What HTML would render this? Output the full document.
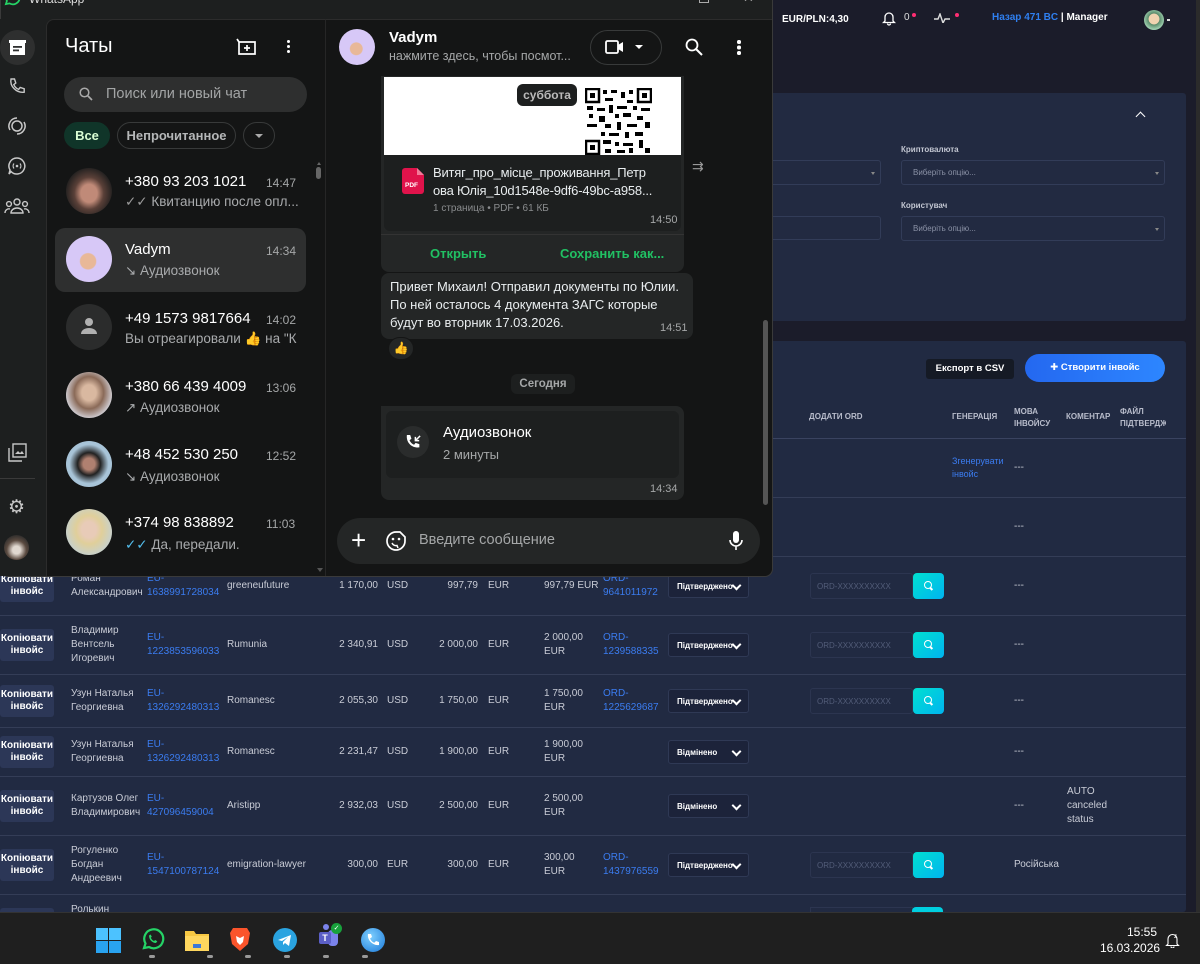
<!DOCTYPE html>
<html><head><meta charset="utf-8">
<style>
*{margin:0;padding:0;box-sizing:border-box}
body{width:1200px;height:964px;overflow:hidden;background:#1b1c2a;font-family:"Liberation Sans","DejaVu Sans",sans-serif;position:relative;color:#fff}
.a{position:absolute}
.t{font-size:10px;color:#c9ccd6;line-height:14px;white-space:nowrap}
.blue{color:#3b7cf0}
.row{position:absolute;left:0;width:1186px;border-bottom:1px solid #343d57}
.c{position:absolute;top:0;height:100%;display:flex;align-items:center}
.r{justify-content:flex-end;width:70px}
.btn{background:#2c3757;border-radius:3px;width:54px;height:32px;font-weight:bold;font-size:10px;line-height:12px;color:#fff;display:flex;align-items:center;justify-content:center;text-align:center}
.sel{width:81px;height:24px;border:1px solid #2f3955;border-radius:3px;background:#1c233a;font-size:8px;font-weight:bold;color:#fff;padding-left:8px;display:flex;align-items:center;position:relative}
.sel:after{content:"";position:absolute;right:8px;top:7px;width:5px;height:5px;border-right:2px solid #fff;border-bottom:2px solid #fff;transform:rotate(45deg)}
.ord{width:103px;height:26px;border:1px solid #2c3550;border-radius:3px;font-size:8px;color:#525c78;padding-left:6px;display:flex;align-items:center;position:relative}
.ordb{position:absolute;left:102px;top:-1px;width:31px;height:26px;border-radius:4px;background:linear-gradient(135deg,#00e0d0,#00b4f0)}
.ordb:before{content:"";position:absolute;left:11px;top:8px;width:6px;height:6px;border:1.5px solid #fff;border-radius:50%}
.ordb:after{content:"";position:absolute;left:17px;top:15px;width:3px;height:1.5px;background:#fff;transform:rotate(45deg)}
.wa{font-family:"Liberation Sans",sans-serif}
.nm{font-size:15px;color:#fff;position:absolute;left:125px}
.tm{font-size:12px;color:#a5a7a8;position:absolute;left:266px}
.sub{font-size:13.5px;color:#a9abad;position:absolute;left:125px;white-space:nowrap}
.av{position:absolute;left:66px;width:46px;height:46px;border-radius:50%}
</style></head><body>

<!-- web page header -->
<div class="a" style="left:782px;top:14px;font-size:10px;font-weight:bold">EUR/PLN:4,30</div>
<svg class="a" style="left:882px;top:10px" width="14" height="16" viewBox="0 0 14 16"><path d="M3 11V7a4 4 0 0 1 8 0v4l1.5 1.5h-11z M5.5 13.5a1.5 1.5 0 0 0 3 0" fill="none" stroke="#fff" stroke-width="1.3"/></svg>
<div class="a" style="left:904px;top:12px;font-size:10px;color:#ddd">0</div>
<div class="a" style="left:912px;top:13px;width:4px;height:4px;border-radius:50%;background:#ff2d72"></div>
<svg class="a" style="left:934px;top:13px" width="16" height="10" viewBox="0 0 16 10"><path d="M0 6h4l2-5 3 9 2-4h5" fill="none" stroke="#ddd" stroke-width="1.4"/></svg>
<div class="a" style="left:955px;top:13px;width:4px;height:4px;border-radius:50%;background:#ff2d72"></div>
<div class="a" style="left:992px;top:12px;font-size:10px;font-weight:bold"><span style="color:#2f7ff0">Назар 471 BC</span> <span style="color:#fff">| Manager</span></div>
<div class="a" style="left:1144px;top:10px;width:20px;height:20px;border-radius:50%;background:radial-gradient(circle at 50% 45%,#f1d3b0 35%,#5a8a6a 38%,#9fd0b0 70%)"></div>
<div class="a" style="left:1167px;top:19px;width:3px;height:1.5px;background:#ddd"></div>

<!-- filter card -->
<div class="a" style="left:0;top:93px;width:1186px;height:228px;border-radius:3px;background:#222a41"></div>
<div class="a" style="left:1137px;top:113px;width:7px;height:7px;border-left:1.5px solid #fff;border-top:1.5px solid #fff;transform:rotate(45deg)"></div>
<div class="a" style="left:901px;top:145px;font-size:8px;color:#c3c7d2;font-weight:bold">Криптовалюта</div>
<div class="a" style="left:901px;top:160px;width:264px;height:25px;border:1px solid #323c58;border-radius:3px;font-size:8px;color:#8b92a6;padding:7px 0 0 11px">Виберіть опцію...</div>
<div class="a" style="left:1155px;top:172px;border:2px solid transparent;border-top:3px solid #888"></div>
<div class="a" style="left:600px;top:160px;width:281px;height:25px;border:1px solid #323c58;border-radius:3px"></div>
<div class="a" style="left:871px;top:172px;border:2px solid transparent;border-top:3px solid #888"></div>
<div class="a" style="left:901px;top:201px;font-size:8px;color:#c3c7d2;font-weight:bold">Користувач</div>
<div class="a" style="left:901px;top:216px;width:264px;height:25px;border:1px solid #323c58;border-radius:3px;font-size:8px;color:#8b92a6;padding:7px 0 0 11px">Виберіть опцію...</div>
<div class="a" style="left:1155px;top:228px;border:2px solid transparent;border-top:3px solid #888"></div>
<div class="a" style="left:600px;top:216px;width:281px;height:24px;border:1px solid #323c58;border-radius:3px"></div>

<!-- table card -->
<div class="a" style="left:0;top:341px;width:1186px;height:571px;background:#212a42;border-radius:3px"></div>
<div class="a" style="left:926px;top:359px;width:88px;height:20px;background:#151a25;border-radius:3px;font-size:9.5px;font-weight:bold;text-align:center;line-height:20px">Експорт в CSV</div>
<div class="a" style="left:1025px;top:354px;width:140px;height:28px;background:linear-gradient(90deg,#2468f0,#2d86ff);border-radius:14px;font-size:9.5px;font-weight:bold;text-align:center;line-height:28px">✚ Створити інвойс</div>
<div class="a" style="left:809px;top:412px;font-size:8px;font-weight:bold;color:#b8bccb">ДОДАТИ ORD</div>
<div class="a" style="left:952px;top:412px;font-size:8px;font-weight:bold;color:#b8bccb">ГЕНЕРАЦІЯ</div>
<div class="a" style="left:1014px;top:406px;font-size:8px;font-weight:bold;color:#b8bccb;line-height:12px">МОВА<br>ІНВОЙСУ</div>
<div class="a" style="left:1066px;top:412px;font-size:8px;font-weight:bold;color:#b8bccb">КОМЕНТАР</div>
<div class="a" style="left:1120px;top:406px;font-size:8px;font-weight:bold;color:#b8bccb;line-height:12px;white-space:nowrap;width:46px;overflow:hidden">ФАЙЛ<br>ПІДТВЕРДЖ</div>
<div class="a" style="left:0;top:438px;width:1186px;height:1px;background:#3a4360"></div>
<div class="row" style="top:439px;height:59px">
 <div class="c t blue" style="left:952px;line-height:13px;font-size:9px">Згенерувати<br>інвойс</div>
 <div class="c t" style="left:1014px">---</div>
</div>
<div class="row" style="top:498px;height:59px"><div class="c t" style="left:1014px">---</div></div>

<div class="row" style="top:557px;height:59px">
 <div class="c" style="left:0"><div class="btn">Копіювати<br>інвойс</div></div>
 <div class="c t" style="left:71px">Роман<br>Александрович</div>
 <div class="c t blue" style="left:147px">EU-<br>1638991728034</div>
 <div class="c t" style="left:227px">greeneufuture</div>
 <div class="c t r" style="left:308px">1 170,00</div>
 <div class="c t" style="left:387px">USD</div>
 <div class="c t r" style="left:408px">997,79</div>
 <div class="c t" style="left:488px">EUR</div>
 <div class="c t" style="left:544px">997,79 EUR</div>
 <div class="c t blue" style="left:603px">ORD-<br>9641011972</div>
 <div class="c" style="left:668px"><div class="sel">Підтверджено</div></div>
 <div class="c" style="left:810px"><div class="ord">ORD-XXXXXXXXXX<div class="ordb"></div></div></div>
 <div class="c t" style="left:1014px">---</div>
</div>
<div class="row" style="top:616px;height:59px">
 <div class="c" style="left:0"><div class="btn">Копіювати<br>інвойс</div></div>
 <div class="c t" style="left:71px">Владимир<br>Вентсель<br>Игоревич</div>
 <div class="c t blue" style="left:147px">EU-<br>1223853596033</div>
 <div class="c t" style="left:227px">Rumunia</div>
 <div class="c t r" style="left:308px">2 340,91</div>
 <div class="c t" style="left:387px">USD</div>
 <div class="c t r" style="left:408px">2 000,00</div>
 <div class="c t" style="left:488px">EUR</div>
 <div class="c t" style="left:544px">2 000,00<br>EUR</div>
 <div class="c t blue" style="left:603px">ORD-<br>1239588335</div>
 <div class="c" style="left:668px"><div class="sel">Підтверджено</div></div>
 <div class="c" style="left:810px"><div class="ord">ORD-XXXXXXXXXX<div class="ordb"></div></div></div>
 <div class="c t" style="left:1014px">---</div>
</div>
<div class="row" style="top:675px;height:53px">
 <div class="c" style="left:0"><div class="btn">Копіювати<br>інвойс</div></div>
 <div class="c t" style="left:71px">Узун Наталья<br>Георгиевна</div>
 <div class="c t blue" style="left:147px">EU-<br>1326292480313</div>
 <div class="c t" style="left:227px">Romanesc</div>
 <div class="c t r" style="left:308px">2 055,30</div>
 <div class="c t" style="left:387px">USD</div>
 <div class="c t r" style="left:408px">1 750,00</div>
 <div class="c t" style="left:488px">EUR</div>
 <div class="c t" style="left:544px">1 750,00<br>EUR</div>
 <div class="c t blue" style="left:603px">ORD-<br>1225629687</div>
 <div class="c" style="left:668px"><div class="sel">Підтверджено</div></div>
 <div class="c" style="left:810px"><div class="ord">ORD-XXXXXXXXXX<div class="ordb"></div></div></div>
 <div class="c t" style="left:1014px">---</div>
</div>
<div class="row" style="top:728px;height:49px">
 <div class="c" style="left:0"><div class="btn">Копіювати<br>інвойс</div></div>
 <div class="c t" style="left:71px">Узун Наталья<br>Георгиевна</div>
 <div class="c t blue" style="left:147px">EU-<br>1326292480313</div>
 <div class="c t" style="left:227px">Romanesc</div>
 <div class="c t r" style="left:308px">2 231,47</div>
 <div class="c t" style="left:387px">USD</div>
 <div class="c t r" style="left:408px">1 900,00</div>
 <div class="c t" style="left:488px">EUR</div>
 <div class="c t" style="left:544px">1 900,00<br>EUR</div>
 <div class="c" style="left:668px"><div class="sel">Відмінено</div></div>
 <div class="c t" style="left:1014px">---</div>
</div>
<div class="row" style="top:777px;height:59px">
 <div class="c" style="left:0"><div class="btn">Копіювати<br>інвойс</div></div>
 <div class="c t" style="left:71px">Картузов Олег<br>Владимирович</div>
 <div class="c t blue" style="left:147px">EU-<br>427096459004</div>
 <div class="c t" style="left:227px">Aristipp</div>
 <div class="c t r" style="left:308px">2 932,03</div>
 <div class="c t" style="left:387px">USD</div>
 <div class="c t r" style="left:408px">2 500,00</div>
 <div class="c t" style="left:488px">EUR</div>
 <div class="c t" style="left:544px">2 500,00<br>EUR</div>
 <div class="c" style="left:668px"><div class="sel">Відмінено</div></div>
 <div class="c t" style="left:1014px">---</div>
 <div class="c t" style="left:1067px">AUTO<br>canceled<br>status</div>
</div>
<div class="row" style="top:836px;height:59px">
 <div class="c" style="left:0"><div class="btn">Копіювати<br>інвойс</div></div>
 <div class="c t" style="left:71px">Рогуленко<br>Богдан<br>Андреевич</div>
 <div class="c t blue" style="left:147px">EU-<br>1547100787124</div>
 <div class="c t" style="left:227px">emigration-lawyer</div>
 <div class="c t r" style="left:308px">300,00</div>
 <div class="c t" style="left:387px">EUR</div>
 <div class="c t r" style="left:408px">300,00</div>
 <div class="c t" style="left:488px">EUR</div>
 <div class="c t" style="left:544px">300,00<br>EUR</div>
 <div class="c t blue" style="left:603px">ORD-<br>1437976559</div>
 <div class="c" style="left:668px"><div class="sel">Підтверджено</div></div>
 <div class="c" style="left:810px"><div class="ord">ORD-XXXXXXXXXX<div class="ordb"></div></div></div>
 <div class="c t" style="left:1014px">Російська</div>
</div>
<div class="a t" style="left:71px;top:903px">Ролькин</div>
<div class="a" style="left:0;top:908px;width:54px;height:4px;background:#2c3757;border-radius:3px 3px 0 0"></div>
<div class="a" style="left:810px;top:907px;width:103px;height:5px;border:1px solid #2c3550;border-bottom:0"></div>
<div class="a" style="left:912px;top:907px;width:31px;height:5px;background:#00cfe0;border-radius:4px 4px 0 0"></div>
<div class="a" style="left:1196px;top:0;width:4px;height:912px;background:#2b2b2b"></div>

<!-- taskbar -->
<div class="a" style="left:0;top:912px;width:1200px;height:52px;background:#1f1f1f;border-top:1px solid #333"></div>
<svg class="a" style="left:96px;top:928px" width="25" height="25"><rect x="0" y="0" width="12" height="12" fill="#4cc2ff"/><rect x="13" y="0" width="12" height="12" fill="#4cc2ff"/><rect x="0" y="13" width="12" height="12" fill="#29a3f0"/><rect x="13" y="13" width="12" height="12" fill="#29a3f0"/></svg>
<svg class="a" style="left:140px;top:927px" width="25" height="25" viewBox="0 0 25 25"><path d="M4 21l1.5-4.5A9.5 9.5 0 1 1 9 20z" fill="none" stroke="#25d366" stroke-width="2.2"/><path d="M9 8.5c0 4 3 7.5 7 7.5l1.3-1.8-2.2-1.2-1 1c-1.5-.7-2.6-1.8-3.3-3.3l1-1-1.2-2.2z" fill="#25d366"/></svg>
<svg class="a" style="left:185px;top:929px" width="24" height="22"><path d="M0 2h9l2 3h13v17H0z" fill="#f7c843"/><rect x="0" y="7" width="24" height="15" fill="#ffd75e"/><rect x="8" y="15" width="8" height="4" fill="#3b78d8"/></svg>
<svg class="a" style="left:230px;top:926px" width="20" height="26" viewBox="0 0 20 26"><path d="M3 2h14l3 5-2 11-8 7-8-7L0 7z" fill="#fb542b"/><path d="M6 10l4 2 4-2-1 6-3 3-3-3z" fill="#fff"/></svg>
<div class="a" style="left:273px;top:928px;width:24px;height:24px;border-radius:50%;background:#2aa3e0"></div>
<svg class="a" style="left:278px;top:934px" width="14" height="12"><path d="M0 6l13-5-2 11-4-3-2 2v-3l5-5-6 4z" fill="#fff"/></svg>
<div class="a" style="left:328px;top:930px;width:10px;height:16px;background:#7b83eb;border-radius:4px"></div>
<div class="a" style="left:319px;top:932px;width:12px;height:12px;background:#5b5fc7;border-radius:2px;font-size:9px;font-weight:bold;text-align:center;line-height:12px">T</div>
<div class="a" style="left:323px;top:924px;width:6px;height:6px;border-radius:50%;background:#7b83eb"></div>
<div class="a" style="left:331px;top:923px;width:11px;height:11px;border-radius:50%;background:#18a13c;font-size:7px;text-align:center;line-height:11px">✓</div>
<div class="a" style="left:361px;top:928px;width:24px;height:24px;border-radius:50%;background:radial-gradient(circle at 40% 35%,#7fd0ff,#1a78d8)"></div>
<svg class="a" style="left:366px;top:933px" width="14" height="14"><path d="M2 1l3 0 1 3-2 1.5c.8 2 2.3 3.5 4.3 4.3L10 8l3 1v3c-6 1-12-5-11-11z" fill="#fff"/></svg>
<div class="a" style="left:149px;top:955px;width:6px;height:3px;border-radius:2px;background:#999"></div>
<div class="a" style="left:207px;top:955px;width:6px;height:3px;border-radius:2px;background:#999"></div>
<div class="a" style="left:245px;top:955px;width:6px;height:3px;border-radius:2px;background:#999"></div>
<div class="a" style="left:284px;top:955px;width:6px;height:3px;border-radius:2px;background:#999"></div>
<div class="a" style="left:323px;top:955px;width:6px;height:3px;border-radius:2px;background:#999"></div>
<div class="a" style="left:362px;top:955px;width:6px;height:3px;border-radius:2px;background:#999"></div>
<div class="a" style="left:1100px;top:924px;width:57px;text-align:right;font-size:12px;line-height:16px;color:#fff">15:55<br>16.03.2026</div>
<svg class="a" style="left:1165px;top:932px" width="15" height="16"><path d="M3 12V7a4.5 4.5 0 0 1 9 0v5l1.5 1.5h-12zM6 14.5a1.5 1.5 0 0 0 3 0" fill="none" stroke="#fff" stroke-width="1.1"/><text x="9" y="6" font-size="6" fill="#fff" font-family="Liberation Sans">z</text></svg>

<!-- WhatsApp window -->
<div class="a wa" style="left:0;top:-30px;width:773px;height:607px;background:#1d1f1f;border:1px solid #3a3a3a;border-radius:8px;overflow:hidden">
 <svg class="a" style="left:2px;top:18px" width="18" height="18" viewBox="0 0 25 25"><path d="M4 21l1.5-4.5A9.5 9.5 0 1 1 9 20z" fill="none" stroke="#25d366" stroke-width="2.4"/></svg>
 <div class="a" style="left:28px;top:21px;font-size:12px;color:#ddd">WhatsApp</div>
 <div class="a" style="left:698px;top:22px;width:10px;height:10px;border:1px solid #aaa"></div>
 <div class="a" style="left:742px;top:22px;font-size:13px;color:#aaa;line-height:10px">✕</div>
</div>
<div class="a wa" style="left:0;top:19px;width:772px;height:557px;overflow:hidden;border-radius:0 0 8px 0">
 <div class="a" style="left:0;top:0;width:46px;height:557px;background:#1d1f1f"></div>
 <div class="a" style="left:0;top:11px;width:35px;height:35px;border-radius:50%;background:#2e2f2f"></div>
 <svg class="a" style="left:8px;top:20px" width="19" height="17"><path d="M1 1h17v3H1z M2 4h15v12H2z" fill="#fff"/><rect x="5" y="7" width="9" height="1.8" fill="#2e2f2f"/><rect x="5" y="10.5" width="6" height="1.8" fill="#2e2f2f"/></svg>
 <svg class="a" style="left:8px;top:59px" width="18" height="18" viewBox="0 0 18 18"><path d="M3 1h3.5l1.3 4-2 1.6c1 2.3 2.6 3.9 4.8 4.8l1.6-2 4 1.3v3.5c-8 1-14.6-6-13.2-13.2z" fill="none" stroke="#c8c8c8" stroke-width="1.4"/></svg>
 <svg class="a" style="left:7px;top:97px" width="20" height="20"><circle cx="10" cy="10" r="5" fill="none" stroke="#c8c8c8" stroke-width="1.5"/><path d="M3 14A8 8 0 0 1 10 2M17 6a8 8 0 0 1-7 12" fill="none" stroke="#c8c8c8" stroke-width="1.5"/></svg>
 <svg class="a" style="left:7px;top:137px" width="20" height="20"><path d="M10 2a8 8 0 1 1-6 13.5L2 18l1-4A8 8 0 0 1 10 2z" fill="none" stroke="#c8c8c8" stroke-width="1.5"/><circle cx="10" cy="10" r="1.3" fill="#c8c8c8"/><path d="M7 7.5a4 4 0 0 0 0 5M13 7.5a4 4 0 0 1 0 5" fill="none" stroke="#c8c8c8" stroke-width="1.2"/></svg>
 <svg class="a" style="left:4px;top:178px" width="26" height="18"><circle cx="13" cy="5" r="3" fill="none" stroke="#c8c8c8" stroke-width="1.4"/><circle cx="5" cy="7" r="2.4" fill="none" stroke="#c8c8c8" stroke-width="1.4"/><circle cx="21" cy="7" r="2.4" fill="none" stroke="#c8c8c8" stroke-width="1.4"/><path d="M7 16a6 5 0 0 1 12 0zM1 16a4 4 0 0 1 5-4M25 16a4 4 0 0 0-5-4" fill="none" stroke="#c8c8c8" stroke-width="1.4"/></svg>
 <svg class="a" style="left:8px;top:424px" width="19" height="19"><rect x="5" y="1" width="13" height="13" fill="none" stroke="#c8c8c8" stroke-width="1.4"/><path d="M1 5v13h13" fill="none" stroke="#c8c8c8" stroke-width="1.4"/><path d="M7 11l3-3 2 2 2-2 2 3z" fill="#c8c8c8"/></svg>
 <div class="a" style="left:0;top:459px;width:35px;height:1px;background:#3a3a3a"></div>
 <div class="a" style="left:8px;top:479px;font-size:19px;color:#c8c8c8;line-height:19px">⚙</div>
 <div class="a" style="left:4px;top:516px;width:25px;height:25px;border-radius:50%;background:radial-gradient(circle at 50% 60%,#e0d8d0 20%,#5a4a40 50%,#2a2a2a 80%)"></div>

 <div class="a" style="left:46px;top:0;width:280px;height:557px;background:#141515;border-top:1px solid #2c2c2c;border-left:1px solid #2c2c2c;border-radius:8px 0 0 0"></div>
 <div class="a" style="left:65px;top:16px;font-size:20px;color:#fff">Чаты</div>
 <svg class="a" style="left:236px;top:19px" width="20" height="17"><path d="M1 1l2 3h16v12H3V4" fill="none" stroke="#fff" stroke-width="1.7"/><path d="M11 7v6M8 10h6" stroke="#fff" stroke-width="1.7"/></svg>
 <div class="a" style="left:287px;top:21px;width:3px;height:3px;border-radius:50%;background:#fff;box-shadow:0 5px 0 #fff,0 10px 0 #fff"></div>
 <div class="a" style="left:64px;top:58px;width:243px;height:35px;border-radius:18px;background:#2e2f2f"></div>
 <svg class="a" style="left:79px;top:68px" width="14" height="14"><circle cx="5.5" cy="5.5" r="4.3" fill="none" stroke="#aaa" stroke-width="1.5"/><path d="M9 9l4 4" stroke="#aaa" stroke-width="1.7"/></svg>
 <div class="a" style="left:106px;top:67px;font-size:14.5px;color:#a3a5a6">Поиск или новый чат</div>
 <div class="a" style="left:64px;top:103px;width:46px;height:27px;border-radius:14px;background:#103529;font-size:13px;font-weight:bold;color:#d9fdd3;text-align:center;line-height:27px">Все</div>
 <div class="a" style="left:117px;top:103px;width:119px;height:27px;border-radius:14px;border:1px solid #383a3a;font-size:13px;font-weight:bold;color:#b5b7b8;text-align:center;line-height:25px">Непрочитанное</div>
 <div class="a" style="left:243px;top:103px;width:32px;height:27px;border-radius:14px;border:1px solid #383a3a"></div>
 <div class="a" style="left:255px;top:115px;border:4px solid transparent;border-top:4px solid #aaa"></div>

 <div class="a" style="left:55px;top:209px;width:251px;height:64px;border-radius:10px;background:#2e2f2f"></div>

 <div class="av" style="top:149px;background:radial-gradient(ellipse at 50% 55%,#c08a78 25%,#5a4038 45%,#1e1e1e 75%)"></div>
 <div class="nm" style="top:154px">+380 93 203 1021</div><div class="tm" style="top:157px">14:47</div>
 <div class="sub" style="top:175px"><span style="color:#9a9a9a">✓✓</span> Квитанцию после опл...</div>

 <div class="av" style="top:217px;background:radial-gradient(circle at 48% 55%,#e8b898 22%,#d7c8f7 25%)"></div>
 <div class="nm" style="top:222px">Vadym</div><div class="tm" style="top:225px">14:34</div>
 <div class="sub" style="top:244px">↘ Аудиозвонок</div>

 <div class="av" style="top:285px;background:#2b2c2c"></div>
 <svg class="a" style="left:80px;top:298px" width="18" height="18"><circle cx="9" cy="5" r="4" fill="#b0b0b0"/><path d="M1 17c0-4 4-6 8-6s8 2 8 6z" fill="#b0b0b0"/></svg>
 <div class="nm" style="top:291px">+49 1573 9817664</div><div class="tm" style="top:294px">14:02</div>
 <div class="sub" style="top:312px">Вы отреагировали 👍 на "К</div>

 <div class="av" style="top:353px;background:radial-gradient(ellipse at 50% 45%,#d9b8a0 22%,#8a6a58 45%,#d8d8e0 75%)"></div>
 <div class="nm" style="top:359px">+380 66 439 4009</div><div class="tm" style="top:362px">13:06</div>
 <div class="sub" style="top:381px">↗ Аудиозвонок</div>

 <div class="av" style="top:422px;background:radial-gradient(ellipse at 50% 50%,#b08070 18%,#222 35%,#a8c4d8 60%)"></div>
 <div class="nm" style="top:427px">+48 452 530 250</div><div class="tm" style="top:430px">12:52</div>
 <div class="sub" style="top:450px">↘ Аудиозвонок</div>

 <div class="av" style="top:490px;background:radial-gradient(ellipse at 50% 45%,#e8cbb8 22%,#e0cf9a 40%,#c9d0c8 70%)"></div>
 <div class="nm" style="top:495px">+374 98 838892</div><div class="tm" style="top:498px">11:03</div>
 <div class="sub" style="top:518px"><span style="color:#53bdeb">✓✓</span> Да, передали.</div>
 <div class="a" style="left:316px;top:148px;width:5px;height:12px;border-radius:3px;background:#666"></div>
 <div class="a" style="left:317px;top:141px;border:2px solid transparent;border-bottom:3px solid #666"></div>
 <div class="a" style="left:317px;top:549px;border:3px solid transparent;border-top:4px solid #555"></div>

 <div class="a" style="left:325px;top:0;width:447px;height:557px;background:#141515;border-top:1px solid #2c2c2c;border-left:1px solid #262626"></div>
 <div class="a" style="left:339px;top:10px;width:36px;height:36px;border-radius:50%;background:radial-gradient(circle at 48% 55%,#e8b898 22%,#d7c8f7 25%)"></div>
 <div class="a" style="left:389px;top:10px;font-size:15px;font-weight:bold;color:#fff">Vadym</div>
 <div class="a" style="left:389px;top:30px;font-size:12.5px;color:#a5a7a8">нажмите здесь, чтобы посмот...</div>
 <div class="a" style="left:590px;top:11px;width:72px;height:35px;border-radius:18px;border:1px solid #383a3a"></div>
 <svg class="a" style="left:605px;top:21px" width="20" height="15"><rect x="1" y="1" width="12" height="12" rx="1.5" fill="none" stroke="#fff" stroke-width="1.8"/><path d="M13 5l5-3v10l-5-3z" fill="#fff"/></svg>
 <div class="a" style="left:635px;top:26px;border:4px solid transparent;border-top:4px solid #fff"></div>
 <svg class="a" style="left:685px;top:19px" width="18" height="18"><circle cx="7" cy="7" r="5.5" fill="none" stroke="#fff" stroke-width="1.8"/><path d="M11 11l6 6" stroke="#fff" stroke-width="2"/></svg>
 <div class="a" style="left:737px;top:21px;width:3.5px;height:3.5px;border-radius:50%;background:#fff;box-shadow:0 5.5px 0 #fff,0 11px 0 #fff"></div>

 <div class="a" style="left:381px;top:57px;width:303px;height:196px;background:#242626;border-radius:0 0 8px 8px"></div>
 <div class="a" style="left:384px;top:58px;width:297px;height:78px;background:#fff"></div>
 <div class="a" style="left:517px;top:65px;width:60px;height:22px;border-radius:6px;background:#1d1f1f;font-size:12px;font-weight:bold;color:#bbb;text-align:center;line-height:22px">суббота</div>
 <svg class="a" style="left:585px;top:69px" width="67" height="67" viewBox="0 0 67 67">
  <rect x="0" y="0" width="67" height="67" fill="#fff"/>
  <rect x="1" y="1" width="13" height="13" fill="none" stroke="#000" stroke-width="2.5"/><rect x="5" y="5" width="5" height="5" fill="#000"/>
  <rect x="53" y="1" width="13" height="13" fill="none" stroke="#000" stroke-width="2.5"/><rect x="57" y="5" width="5" height="5" fill="#000"/>
  <rect x="1" y="53" width="13" height="13" fill="none" stroke="#000" stroke-width="2.5"/><rect x="5" y="57" width="5" height="5" fill="#000"/>
  <path d="M18 2h4v4h-4zM26 2h6v3h-6zM36 4h4v6h-4zM44 2h4v4h-4zM20 10h8v3h-8zM42 12h6v3h-6zM2 18h6v4H2zM12 20h8v3h-8zM24 17h4v8h-4zM32 18h10v3H32zM48 18h4v4h-4zM56 20h9v3h-9zM4 26h4v4H4zM14 28h6v6h-6zM30 26h4v4h-4zM38 25h8v4h-8zM52 28h6v4h-6zM2 36h10v3H2zM20 36h6v4h-6zM32 34h4v8h-4zM42 36h10v3H42zM60 34h5v6h-5zM16 44h4v4h-4zM24 45h10v3H24zM40 44h4v6h-4zM50 44h8v4h-8zM18 52h8v4h-8zM30 54h4v4h-4zM38 55h10v3H38zM54 52h4v8h-4zM20 61h6v4h-6zM32 62h8v3h-8zM44 60h4v5h-4zM60 60h5v5h-5z" fill="#000"/>
 </svg>
 <div class="a" style="left:384px;top:136px;width:297px;height:76px;background:#1d1f1f;border-radius:0 0 6px 6px"></div>
 <svg class="a" style="left:402px;top:149px" width="22" height="26"><path d="M3 0h12l7 7v16a3 3 0 0 1-3 3H3a3 3 0 0 1-3-3V3a3 3 0 0 1 3-3z" fill="#e0134b"/><path d="M15 0v7h7" fill="#f27a98"/><text x="3" y="19" font-size="6.5" font-weight="bold" fill="#fff" font-family="Liberation Sans">PDF</text></svg>
 <div class="a" style="left:433px;top:145px;font-size:13px;color:#e9edef;line-height:18px;width:230px;white-space:nowrap;overflow:hidden;letter-spacing:-0.2px">Витяг_про_місце_проживання_Петр<br>ова Юлія_10d1548e-9df6-49bc-a958...</div>
 <div class="a" style="left:433px;top:184px;font-size:10px;color:#8a8c8e">1 страница • PDF • 61 КБ</div>
 <div class="a" style="left:650px;top:195px;font-size:11px;color:#a5a7a8">14:50</div>
 <div class="a" style="left:381px;top:215px;width:303px;height:1px;background:#333"></div>
 <div class="a" style="left:430px;top:227px;font-size:13px;font-weight:bold;color:#21c063">Открыть</div>
 <div class="a" style="left:560px;top:227px;font-size:13px;font-weight:bold;color:#21c063">Сохранить как...</div>
 <div class="a" style="left:692px;top:139px;font-size:14px;color:#999">⇉</div>

 <div class="a" style="left:381px;top:254px;width:312px;height:66px;background:#242626;border-radius:8px"></div>
 <div class="a" style="left:390px;top:259px;font-size:13px;color:#e9edef;line-height:18px">Привет Михаил! Отправил документы по Юлии.<br>По ней осталось 4 документа ЗАГС которые<br>будут во вторник 17.03.2026.</div>
 <div class="a" style="left:660px;top:303px;font-size:11px;color:#a5a7a8">14:51</div>
 <div class="a" style="left:388px;top:318px;width:26px;height:23px;border-radius:12px;background:#242626;border:1px solid #141515;font-size:12px;text-align:center;line-height:21px">👍</div>

 <div class="a" style="left:511px;top:355px;width:64px;height:20px;border-radius:6px;background:#1d1f1f;font-size:11.5px;font-weight:bold;color:#a5a7a8;text-align:center;line-height:20px">Сегодня</div>

 <div class="a" style="left:381px;top:387px;width:303px;height:94px;background:#242626;border-radius:0 8px 8px 8px"></div>
 <div class="a" style="left:386px;top:392px;width:293px;height:67px;background:#1d1f1f;border-radius:6px"></div>
 <div class="a" style="left:397px;top:407px;width:32px;height:32px;border-radius:50%;background:#2a2c2c"></div>
 <svg class="a" style="left:405px;top:415px" width="17" height="17" viewBox="0 0 18 18"><path d="M2 1h3.5l1.3 4-2 1.6c1 2.3 2.6 3.9 4.8 4.8l1.6-2 4 1.3v3.5C7 15 1 9 2 1z" fill="#fff"/><path d="M16 2l-5 5M11 3v4h4" fill="none" stroke="#fff" stroke-width="1.6"/></svg>
 <div class="a" style="left:443px;top:405px;font-size:15px;color:#fff">Аудиозвонок</div>
 <div class="a" style="left:443px;top:428px;font-size:13px;color:#a5a7a8">2 минуты</div>
 <div class="a" style="left:650px;top:464px;font-size:11px;color:#a5a7a8">14:34</div>

 <div class="a" style="left:763px;top:301px;width:5px;height:185px;border-radius:3px;background:#555"></div>

 <div class="a" style="left:337px;top:499px;width:423px;height:46px;border-radius:23px;background:#242626"></div>
 <div class="a" style="left:351px;top:505px;font-size:26px;color:#fff;line-height:32px">+</div>
 <svg class="a" style="left:386px;top:512px" width="20" height="20"><path d="M10 1a9 9 0 1 0 9 9V6l-5-5z" fill="none" stroke="#fff" stroke-width="1.7"/><circle cx="7" cy="8" r="1.3" fill="#fff"/><circle cx="13" cy="8" r="1.3" fill="#fff"/><path d="M6 12c1 2 3 3 5 2.5l1 2.5" fill="none" stroke="#fff" stroke-width="1.5"/></svg>
 <div class="a" style="left:419px;top:513px;font-size:14.5px;color:#a5a7a8">Введите сообщение</div>
 <svg class="a" style="left:729px;top:512px" width="14" height="20"><rect x="4" y="0" width="6" height="12" rx="3" fill="#fff"/><path d="M1 9a6 6 0 0 0 12 0M7 15v4" fill="none" stroke="#fff" stroke-width="1.6"/></svg>
</div>
</body></html>
